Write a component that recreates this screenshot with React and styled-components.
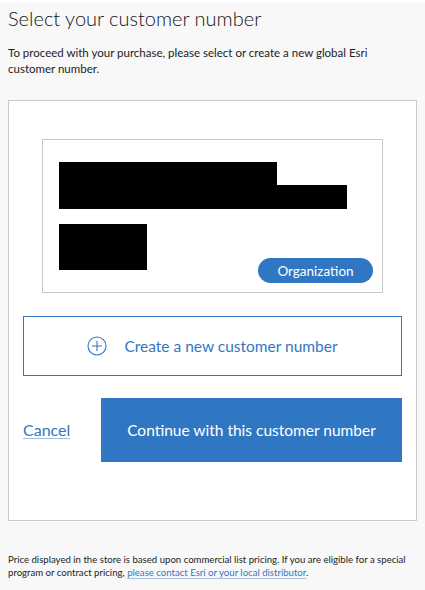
import React from "react";
import styled, { createGlobalStyle } from "styled-components";

const BLUE = "#3077c3";

const GlobalStyle = createGlobalStyle`
  html, body {
    margin: 0;
    padding: 0;
    background: #f8f8f8;
  }
  body {
    font-family: Lato, "Open Sans", sans-serif;
    color: #151515;
  }
`;

const Page = styled.div`
  border-top: 3px solid #ffffff;
  padding: 0 8px 12px;
`;

const Title = styled.h1`
  margin: 0;
  padding-top: 2px;
  font-size: 20px;
  font-weight: 300;
  line-height: 26px;
  color: #151515;
`;

const Intro = styled.p`
  margin: 14px 0 0;
  font-size: 11.5px;
  line-height: 16px;
  color: #222;
`;

const Card = styled.div`
  margin-top: 23px;
  background: #fff;
  border: 1px solid #cacaca;
  padding: 38px 14px 58px;
`;

const AccountTile = styled.div`
  margin: 0 19px;
  border: 1px solid #cacaca;
  padding: 22px 9px 22px 16px;
  display: flex;
  flex-direction: column;
`;

const NameBlock = styled.div`
  display: flex;
  align-items: flex-end;
`;

const Redact = styled.div`
  background: #000;
  width: ${(p) => p.w}px;
  height: ${(p) => p.h}px;
`;

const TileBottom = styled.div`
  margin-top: 15px;
  display: flex;
  justify-content: space-between;
  align-items: flex-end;
`;

const Pill = styled.span`
  margin-bottom: -13px;
  background: ${BLUE};
  color: #fff;
  border-radius: 13px;
  height: 25px;
  width: 115px;
  display: inline-flex;
  align-items: center;
  justify-content: center;
  font-size: 13.5px;
`;

const CreateButton = styled.button`
  margin-top: 23px;
  width: 100%;
  height: 60px;
  background: #fff;
  border: 1px solid ${BLUE};
  color: ${BLUE};
  font-family: inherit;
  font-size: 15.5px;
  display: flex;
  align-items: center;
  justify-content: center;
  gap: 17px;
  cursor: pointer;
`;

const Actions = styled.div`
  margin-top: 22px;
  display: flex;
  align-items: center;
  justify-content: space-between;
`;

const CancelLink = styled.a`
  color: ${BLUE};
  font-size: 16px;
  text-decoration: none;
  border-bottom: 1px solid #9fc0e3;
  line-height: 17px;
`;

const ContinueButton = styled.button`
  width: 301px;
  height: 64px;
  background: ${BLUE};
  border: none;
  color: #fff;
  font-family: inherit;
  font-size: 15.5px;
  cursor: pointer;
`;

const Footer = styled.p`
  margin: 32px 0 0;
  font-size: 9.6px;
  line-height: 13px;
  color: #222;
`;

const FooterLink = styled.a`
  color: ${BLUE};
  text-decoration: none;
  border-bottom: 1px solid #9fc0e3;
`;

const PlusCircle = () => (
  <svg width="20" height="20" viewBox="0 0 20 20" fill="none" stroke={BLUE} strokeWidth="1.1">
    <circle cx="10" cy="10" r="9" />
    <path d="M10 5v10M5 10h10" />
  </svg>
);

export default function App() {
  return (
    <>
      <GlobalStyle />
      <Page>
        <Title>Select your customer number</Title>
        <Intro>
          To proceed with your purchase, please select or create a new global Esri
          customer number.
        </Intro>
        <Card>
          <AccountTile>
            <NameBlock>
              <Redact w={218} h={47} />
              <Redact w={70} h={24} />
            </NameBlock>
            <TileBottom>
              <Redact w={88} h={46} />
              <Pill>Organization</Pill>
            </TileBottom>
          </AccountTile>
          <CreateButton>
            <PlusCircle />
            Create a new customer number
          </CreateButton>
          <Actions>
            <CancelLink href="#">Cancel</CancelLink>
            <ContinueButton>Continue with this customer number</ContinueButton>
          </Actions>
        </Card>
        <Footer>
          Price displayed in the store is based upon commercial list pricing. If you are eligible for a special
          program or contract pricing, <FooterLink href="#">please contact Esri or your local distributor</FooterLink>.
        </Footer>
      </Page>
    </>
  );
}
